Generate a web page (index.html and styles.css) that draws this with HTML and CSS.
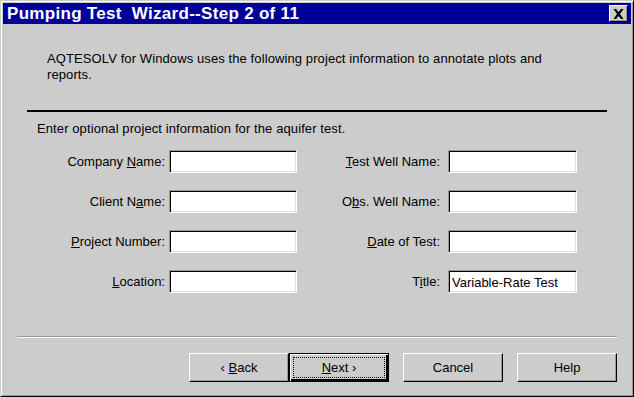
FILE: index.html
```html
<!DOCTYPE html>
<html lang="en">

<head>
    <meta charset="UTF-8">
    <title>Pumping Test Wizard</title>
    <link rel="stylesheet" href="styles.css">
</head>

<body>
    <div class="window">
        <div class="titlebar">
            <span class="title">Pumping Test&nbsp; Wizard--Step 2 of 11</span>
            <button class="close-btn" type="button">
                <svg width="11" height="10" viewBox="0 0 11 10">
                    <path d="M0.5 0h2.5l2.5 3 2.5-3h2.5L7 5l3.5 5H8L5.5 7 3 10H0.5L4 5z" fill="#000" />
                </svg>
            </button>
        </div>

        <div class="content">
            <p class="intro">AQTESOLV for Windows uses the following project information to annotate plots and reports.</p>
            <div class="rule"></div>
            <p class="hint">Enter optional project information for the aquifer test.</p>

            <div class="form">
                <label class="field-label">Company <u>N</u>ame:</label>
                <input class="field" type="text">
                <label class="field-label"><u>T</u>est Well Name:</label>
                <input class="field field-right" type="text">

                <label class="field-label">Client N<u>a</u>me:</label>
                <input class="field" type="text">
                <label class="field-label">O<u>b</u>s. Well Name:</label>
                <input class="field field-right" type="text">

                <label class="field-label"><u>P</u>roject Number:</label>
                <input class="field" type="text">
                <label class="field-label"><u>D</u>ate of Test:</label>
                <input class="field field-right" type="text">

                <label class="field-label"><u>L</u>ocation:</label>
                <input class="field" type="text">
                <label class="field-label">T<u>i</u>tle:</label>
                <input class="field field-right" type="text" value="Variable-Rate Test">
            </div>

            <div class="divider"></div>

            <div class="buttons">
                <div class="pair">
                    <button class="btn" type="button">&lsaquo; <u>B</u>ack</button>
                    <button class="btn btn-default" type="button"><span class="focus"><u>N</u>ext &rsaquo;</span></button>
                </div>
                <button class="btn" type="button">Cancel</button>
                <button class="btn" type="button">Help</button>
            </div>
        </div>
    </div>
</body>

</html>
```

FILE: styles.css
```css
html,
body {
    margin: 0;
    padding: 0;
    background-color: #cccccc;
}

body {
    font-family: 'Liberation Sans', Arial, sans-serif;
    font-size: 13px;
    color: #000000;
}

.window {
    width: 634px;
    height: 397px;
    box-sizing: border-box;
    border: 1px solid;
    border-color: #cccccc #000000 #000000 #cccccc;
    box-shadow: inset 1px 1px 0 #ffffff, inset -1px -1px 0 #999999;
    padding: 2px;
    display: flex;
    flex-direction: column;
}

.titlebar {
    height: 21px;
    background-color: #000099;
    display: flex;
    align-items: center;
    justify-content: space-between;
    padding: 0 3px 0 4px;
    flex-shrink: 0;
}

.title {
    color: #ffffff;
    font-weight: bold;
    font-size: 17px;
    letter-spacing: 0.3px;
}

.close-btn {
    width: 19px;
    height: 17px;
    padding: 0;
    margin: 0;
    background-color: #cccccc;
    border: 1px solid;
    border-color: #ffffff #000000 #000000 #ffffff;
    box-shadow: inset -1px -1px 0 #999999;
    display: flex;
    align-items: center;
    justify-content: center;
}

.content {
    flex: 1;
    display: flex;
    flex-direction: column;
}

.intro {
    margin: 27px 0 0 44px;
    width: 505px;
    line-height: 16px;
    letter-spacing: 0.1px;
}

.rule {
    margin: 27px 0 0 24px;
    width: 580px;
    height: 2px;
    background-color: #000000;
}

.hint {
    margin: 9px 0 0 34px;
    line-height: 16px;
    letter-spacing: 0.1px;
}

.form {
    margin: 13px 0 0 37px;
    display: grid;
    grid-template-columns: 129px 128px 147px 133px;
    grid-auto-rows: 23px;
    row-gap: 17px;
    align-items: center;
}

.field-label {
    text-align: right;
    padding-right: 4px;
}

.field {
    box-sizing: border-box;
    width: 128px;
    height: 23px;
    margin: 0;
    padding: 1px 3px 0;
    font-family: inherit;
    font-size: 13px;
    background-color: #ffffff;
    border: 1px solid;
    border-color: #999999 #ffffff #ffffff #999999;
    box-shadow: inset 1px 1px 0 #000000, inset -1px -1px 0 #dddddd;
    outline: none;
}

.field-right {
    width: 129px;
    margin-left: 4px;
}

.divider {
    margin: 43px 0 0 14px;
    width: 600px;
    height: 1px;
    background-color: #999999;
    border-bottom: 1px solid #ffffff;
}

.buttons {
    margin: 15px 0 0 186px;
    display: flex;
    gap: 14px;
}

.pair {
    display: flex;
}

.btn {
    box-sizing: border-box;
    width: 100px;
    height: 29px;
    margin: 0;
    padding: 0;
    font-family: inherit;
    font-size: 13px;
    color: #000000;
    background-color: #cccccc;
    border: 1px solid;
    border-color: #ffffff #000000 #000000 #ffffff;
    box-shadow: inset -1px -1px 0 #999999;
}

.btn-default {
    border: 1px solid #000000;
    box-shadow: inset 1px 1px 0 #ffffff, inset -2px -2px 0 #000000, inset -1px -1px 0 #999999;
    padding: 3px;
}

.focus {
    display: flex;
    align-items: center;
    justify-content: center;
    height: 100%;
    border: 1px dotted #000000;
    box-sizing: border-box;
}
```
